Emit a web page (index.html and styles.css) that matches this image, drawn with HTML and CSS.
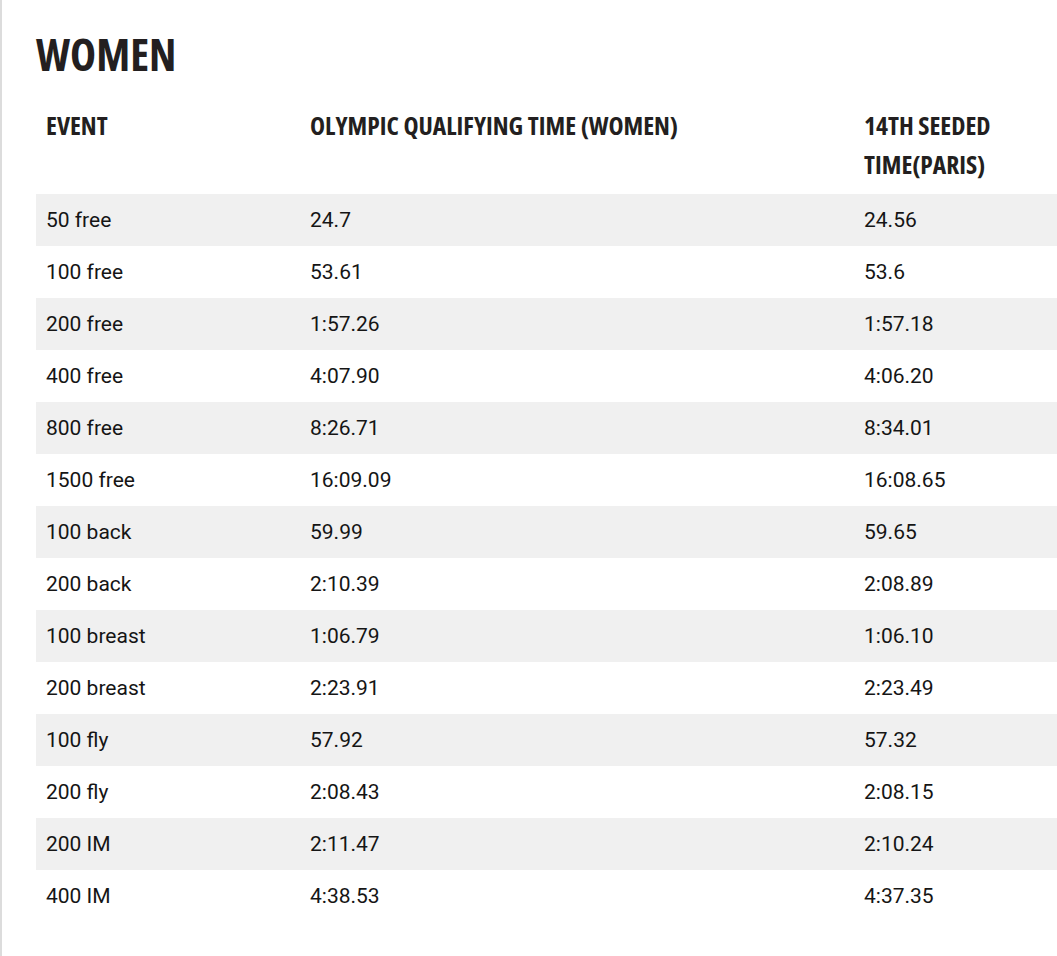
FILE: index.html
```html
<!DOCTYPE html>
<html>
<head>
<meta charset="utf-8">
<link rel="stylesheet" href="styles.css">
</head>
<body>
<div class="page">
  <h1 class="title">WOMEN</h1>
  <table class="times">
    <colgroup>
      <col class="c1"><col class="c2"><col class="c3">
    </colgroup>
    <thead>
      <tr>
        <th>EVENT</th>
        <th>OLYMPIC QUALIFYING TIME (WOMEN)</th>
        <th>14TH SEEDED TIME(PARIS)</th>
      </tr>
    </thead>
    <tbody>
      <tr><td>50 free</td><td>24.7</td><td>24.56</td></tr>
      <tr><td>100 free</td><td>53.61</td><td>53.6</td></tr>
      <tr><td>200 free</td><td>1:57.26</td><td>1:57.18</td></tr>
      <tr><td>400 free</td><td>4:07.90</td><td>4:06.20</td></tr>
      <tr><td>800 free</td><td>8:26.71</td><td>8:34.01</td></tr>
      <tr><td>1500 free</td><td>16:09.09</td><td>16:08.65</td></tr>
      <tr><td>100 back</td><td>59.99</td><td>59.65</td></tr>
      <tr><td>200 back</td><td>2:10.39</td><td>2:08.89</td></tr>
      <tr><td>100 breast</td><td>1:06.79</td><td>1:06.10</td></tr>
      <tr><td>200 breast</td><td>2:23.91</td><td>2:23.49</td></tr>
      <tr><td>100 fly</td><td>57.92</td><td>57.32</td></tr>
      <tr><td>200 fly</td><td>2:08.43</td><td>2:08.15</td></tr>
      <tr><td>200 IM</td><td>2:11.47</td><td>2:10.24</td></tr>
      <tr><td>400 IM</td><td>4:38.53</td><td>4:37.35</td></tr>
    </tbody>
  </table>
</div>
</body>
</html>
```

FILE: styles.css
```css
html, body {
  margin: 0;
  padding: 0;
  background: #fff;
  overflow: hidden;
}
.page {
  border-left: 2px solid #dcdcdc;
  min-height: 956px;
  box-sizing: border-box;
  padding: 27px 0 0 34px;
  overflow: hidden;
}
.title {
  margin: 0 0 25px 0;
  font-family: "Open Sans", sans-serif;
  font-stretch: 75%;
  font-weight: 700;
  font-size: 44px;
  line-height: 54px;
  color: #231f20;
}
.times {
  border-collapse: collapse;
  table-layout: fixed;
  width: 1040px;
}
.c1 { width: 264px; }
.c2 { width: 554px; }
.c3 { width: 222px; }
.times th {
  text-align: left;
  vertical-align: top;
  font-family: "Open Sans", sans-serif;
  font-stretch: 75%;
  font-weight: 700;
  font-size: 25.5px;
  line-height: 39px;
  color: #231f20;
  padding: 0 10px 10px 10px;
}
.times td {
  font-family: Roboto, "Liberation Sans", sans-serif;
  font-size: 21px;
  color: #151515;
  height: 52px;
  padding: 0 10px;
  box-sizing: border-box;
  vertical-align: middle;
}
.times tbody tr:nth-child(odd) {
  background: #f0f0f0;
}
```
